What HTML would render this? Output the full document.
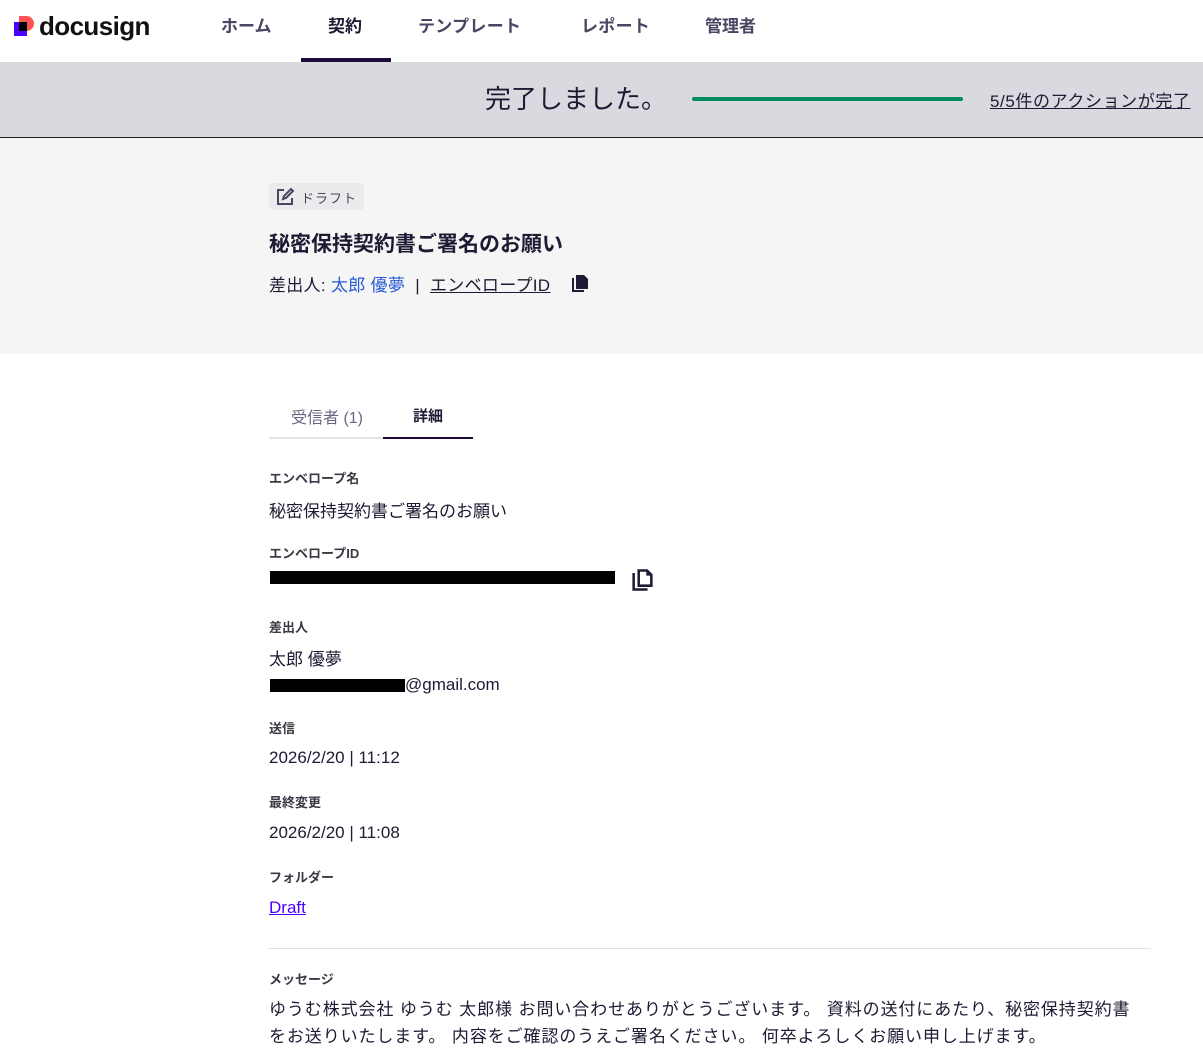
<!DOCTYPE html>
<html><head><meta charset="utf-8"><style>
*{margin:0;padding:0;box-sizing:border-box}
body{width:1203px;height:1058px;overflow:hidden;background:#fff;font-family:"Liberation Sans","Noto Sans CJK JP",sans-serif;color:#1e1a33;position:relative}
.a{position:absolute;white-space:nowrap}
.nav{font-size:17px;font-weight:bold;color:#4a4560;top:12px}
.lbl{font-size:13px;font-weight:bold;color:#3a3a45}
.val{font-size:17px;color:#1e1a33}
.blk{position:absolute;background:#000;height:13px}
</style></head><body>
<!-- header -->
<div class="a" style="left:14px;top:16px;width:20px;height:20px">
<div style="position:absolute;left:0;top:6px;width:13px;height:14px;background:#4c00ff"></div>
<div style="position:absolute;left:5px;top:0;width:15px;height:15px;background:#ff5252;border-radius:0 8px 8px 0"></div>
<div style="position:absolute;left:5px;top:6px;width:8px;height:9px;background:#000"></div>
</div>
<div class="a" style="left:39px;top:11px;font-size:26px;font-weight:bold;letter-spacing:-0.6px;color:#111">docusign</div>
<div class="a nav" style="left:221px">ホーム</div>
<div class="a nav" style="left:328px;color:#1e1a33">契約</div>
<div class="a nav" style="left:418px;letter-spacing:0.3px">テンプレート</div>
<div class="a nav" style="left:581px;letter-spacing:0.3px">レポート</div>
<div class="a nav" style="left:705px">管理者</div>
<div class="a" style="left:301px;top:58px;width:90px;height:4px;background:#1e0b3c"></div>
<!-- banner -->
<div class="a" style="left:0;top:62px;width:1203px;height:76px;background:#d9dae0;border-bottom:1px solid #222"></div>
<div class="a" style="left:485px;top:79px;font-size:26px;color:#1e1a33">完了しました。</div>
<div class="a" style="left:692px;top:97px;width:271px;height:4px;background:#008a5e;border-radius:2px"></div>
<div class="a" style="left:990px;top:87px;font-size:17px;letter-spacing:0.6px;text-decoration:underline;color:#1e1a33">5/5件のアクションが完了</div>
<!-- gray section -->
<div class="a" style="left:0;top:138px;width:1203px;height:216px;background:#f5f5f5"></div>
<div class="a" style="left:269px;top:183px;width:95px;height:27px;background:#ebebed;border-radius:4px"></div>
<svg class="a" style="left:275px;top:187px" width="20" height="20" viewBox="0 0 20 20" fill="none" stroke="#4a4560" stroke-width="2"><path d="M9 3H3v14h14v-6"/><path d="M8 12l1-3 7-7 2 2-7 7z"/></svg>
<div class="a" style="left:301px;top:188px;font-size:13px;color:#4a4560;letter-spacing:1px">ドラフト</div>
<div class="a" style="left:269px;top:228px;font-size:21px;font-weight:bold;color:#1e1a33">秘密保持契約書ご署名のお願い</div>
<div class="a" style="left:269px;top:271px;font-size:17px;color:#1e1a33;letter-spacing:0.3px">差出人: <span style="color:#2a5bd7">太郎 優夢</span> &nbsp;| &nbsp;<span style="text-decoration:underline">エンベロープID</span></div>
<svg class="a" style="left:571px;top:274px" width="18" height="19" viewBox="0 0 18 19" fill="#1e1a33"><path d="M1 4h2v12h10v2H1z"/><path d="M5 1h8l4 4v10H5z"/></svg>
<!-- tabs -->
<div class="a" style="left:291px;top:404px;font-size:16px;color:#6a6680">受信者 (1)</div>
<div class="a" style="left:413px;top:405px;font-size:15px;font-weight:bold;color:#1e1a33">詳細</div>
<div class="a" style="left:269px;top:437px;width:114px;height:2px;background:#e3e3e8"></div>
<div class="a" style="left:383px;top:437px;width:90px;height:2px;background:#1e0b3c"></div>
<!-- details -->
<div class="a lbl" style="left:269px;top:468px">エンベロープ名</div>
<div class="a val" style="left:269px;top:497px">秘密保持契約書ご署名のお願い</div>
<div class="a lbl" style="left:269px;top:543px">エンベロープID</div>
<div class="blk" style="left:270px;top:571px;width:345px"></div>
<svg class="a" style="left:631px;top:568px" width="23" height="24" viewBox="0 0 18 19" fill="#1e1a33"><path d="M1 4h2v12h10v2H1z"/><path d="M5 1h8l4 4v10H5zM7 3v10h8V6h-3V3z" fill-rule="evenodd"/></svg>
<div class="a lbl" style="left:269px;top:617px">差出人</div>
<div class="a val" style="left:269px;top:645px">太郎 優夢</div>
<div class="blk" style="left:270px;top:679px;width:135px"></div>
<div class="a" style="left:405px;top:675px;font-size:17px">@gmail.com</div>
<div class="a lbl" style="left:269px;top:718px">送信</div>
<div class="a val" style="left:269px;top:748px">2026/2/20 | 11:12</div>
<div class="a lbl" style="left:269px;top:792px">最終変更</div>
<div class="a val" style="left:269px;top:823px">2026/2/20 | 11:08</div>
<div class="a lbl" style="left:269px;top:867px">フォルダー</div>
<div class="a val" style="left:269px;top:898px;color:#4c00ff;text-decoration:underline">Draft</div>
<div class="a" style="left:269px;top:948px;width:882px;height:1px;background:#e0e0e0"></div>
<div class="a lbl" style="left:269px;top:969px">メッセージ</div>
<div class="a val" style="left:269px;top:996px;line-height:27px;letter-spacing:0.9px">ゆうむ株式会社 ゆうむ 太郎様 お問い合わせありがとうございます。 資料の送付にあたり、秘密保持契約書<br>をお送りいたします。 内容をご確認のうえご署名ください。 何卒よろしくお願い申し上げます。</div>
</body></html>
